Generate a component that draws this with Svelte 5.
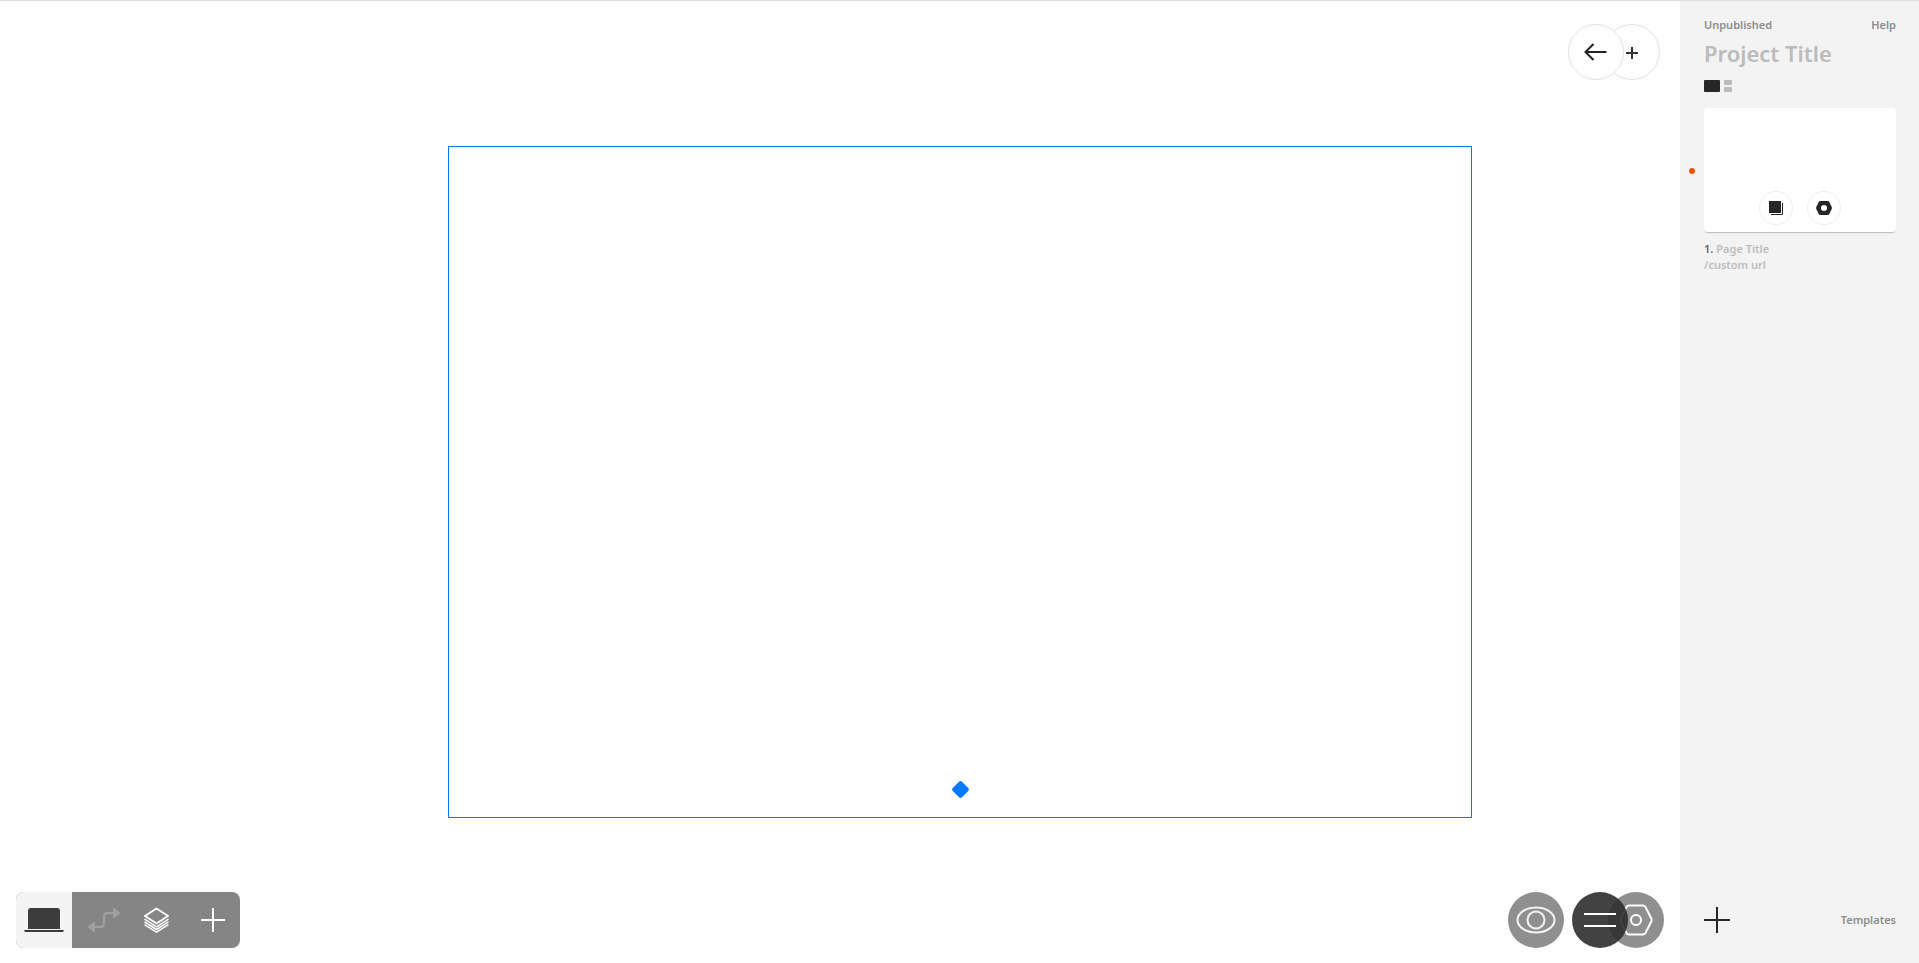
<script>
let view = $state('single');
let menuOpen = $state(true);
let title = $state('');

let pages = $state([
	{ id: 1, title: '', url: '' },
]);

function addPage() {
	pages.push({ id: pages.length + 1, title: '', url: '' });
}
</script>

<div class="editor">
	<main class="stage">
		<section class="frame" aria-label="Canvas">
			<button class="handle" aria-label="Resize page"></button>
		</section>
	</main>

	<nav class="history">
		<button class="round outline front" aria-label="Back">
			<svg width="24" height="18" viewBox="0 0 24 18">
				<path d="M22.500 9H2M9.500 1L1.500 9l8 8" fill="none" stroke="#222" stroke-width="2" />
			</svg>
		</button>
		<button class="round outline behind" aria-label="Add">
			<svg width="12" height="14" viewBox="0 -2 12 14">
				<path d="M6 0v12M0 6h12" stroke="#333" stroke-width="2" />
			</svg>
		</button>
	</nav>

	<nav class="tools">
		<button class="active" aria-label="Desktop">
			<svg width="40" height="24" viewBox="0 0 40 24">
				<path d="M4 21V3q0-3 3-3h26q3 0 3 3v18z" fill="#3c3c3c" />
				<path d="M0 22h40l-1 2H1z" fill="#3c3c3c" />
			</svg>
		</button>
		<button aria-label="Connect" disabled>
			<svg width="40" height="24" viewBox="-9 0 40 24">
				<path d="M25 5h-6q-4 0-4 4v6q0 4-4 4H5" fill="none" stroke="#a0a0a0" stroke-width="2" />
				<path d="M25 1l5 4-5 4zM5 15l-5 4 5 4z" fill="#a0a0a0" stroke="#a0a0a0" stroke-width="2" stroke-linejoin="round" />
			</svg>
		</button>
		<button aria-label="Layers">
			<svg width="26" height="26" viewBox="0 0 26 26" fill="none" stroke="#fff" stroke-width="2" stroke-linejoin="round">
				<path d="M13.500 1.500L25 9l-11.500 7.500L2 9z" />
				<path d="M1.500 12.200l12 7.600 12-7.600M1.500 14.900l12 7.600 12-7.600M1.500 17.600l12 7.600 12-7.600" stroke-width="1.500" />
			</svg>
		</button>
		<button aria-label="Add element">
			<svg width="26" height="24" viewBox="-2 0 26 24">
				<path d="M12 0v24M0 12h24" stroke="#fff" stroke-width="2" />
			</svg>
		</button>
	</nav>

	<nav class="actions">
		<button class="round solid" aria-label="Preview">
			<svg width="40" height="28" viewBox="0 0 40 28" fill="none" stroke="#f4f4f4" stroke-width="2">
				<ellipse cx="20" cy="14" rx="18.500" ry="12.500" />
				<circle cx="20" cy="14" r="8.500" />
			</svg>
		</button>
		<button class="round dark front" aria-label="Menu" aria-expanded={menuOpen} onclick={() => menuOpen = !menuOpen}>
			<svg width="32" height="14" viewBox="0 0 32 14">
				<path d="M0 1h32M0 13h32" stroke="#fff" stroke-width="2" />
			</svg>
		</button>
		<button class="round solid behind" aria-label="Settings">
			<svg width="34" height="32" viewBox="0 0 34 32" fill="none" stroke="#fff" stroke-width="2">
				<path d="M10 1.500h14q1.500 0 2.300 1.300l6 11.700q.7 1.500 0 3l-6 11.700q-.8 1.300-2.300 1.300H10q-1.500 0-2.300-1.300l-6-11.700q-.7-1.500 0-3l6-11.700Q8.500 1.500 10 1.500z" />
				<circle cx="17" cy="16" r="5" />
			</svg>
		</button>
	</nav>

	{#if menuOpen}
		<aside class="sidebar">
			<header class="row">
				<button class="link">Unpublished</button>
				<a class="link" href="#help">Help</a>
			</header>

			<input class="title" aria-label="Project title" placeholder="Project Title" bind:value={title} />

			<div class="views">
				<button class:on={view === 'single'} aria-label="Single view" onclick={() => view = 'single'}>
					<svg width="16" height="12" viewBox="0 0 16 12"><rect width="16" height="12" rx="1" /></svg>
				</button>
				<button class:on={view === 'grid'} aria-label="Grid view" onclick={() => view = 'grid'}>
					<svg width="8" height="12" viewBox="0 0 8 12"><rect width="8" height="5" rx="1" /><rect y="7" width="8" height="5" rx="1" /></svg>
				</button>
			</div>

			{#each pages as page, i (page.id)}
				<article class="page">
					<div class="thumb" class:current={i === 0}>
						<button aria-label="Duplicate page">
							<svg width="14" height="14" viewBox="0 0 14 14">
								<rect width="12" height="12" fill="#262626" />
								<path d="M13.500 2v11.500H2" fill="none" stroke="#262626" />
							</svg>
						</button>
						<button aria-label="Page settings">
							<svg width="16" height="14" viewBox="0 0 16 14">
								<path d="M4 0h8q.8 0 1.200.7l2.500 5.300q.5 1 0 2l-2.500 5.300Q12.800 14 12 14H4q-.8 0-1.200-.7L.3 8q-.5-1 0-2L2.800.7Q3.200 0 4 0z" fill="#262626" />
								<circle cx="8" cy="7" r="3" fill="#fff" />
							</svg>
						</button>
					</div>
					<div class="line">
						<label for="page-{page.id}">{i + 1}.</label>
						<input id="page-{page.id}" placeholder="Page Title" bind:value={page.title} />
					</div>
					<div class="line">
						<input aria-label="Custom url" placeholder="/custom url" bind:value={page.url} />
					</div>
				</article>
			{/each}

			<footer class="row">
				<button class="add" aria-label="Add page" onclick={addPage}>
					<svg width="26" height="26" viewBox="0 0 26 26">
						<path d="M13 0v26M0 13h26" stroke="#262626" stroke-width="2" />
					</svg>
				</button>
				<button class="link">Templates</button>
			</footer>
		</aside>
	{/if}
</div>

<style>
:global(body) {
	margin: 0;
	background: #fefefe;
}

.editor {
	--sidebar: 239px;

	position: relative;
	box-sizing: border-box;
	min-height: 100vh;
	border-top: 1px solid #ddd;

	display: grid;
	grid-template-columns: 1fr var(--sidebar);

	font: 600 11px/16px 'Noto Sans', 'Open Sans', sans-serif;
}

button {
	appearance: none;
	border: 0;
	padding: 0;
	background: none;
	font: inherit;
	color: inherit;
	cursor: pointer;
}

input {
	box-sizing: border-box;
	border: 0;
	padding: 0;
	min-width: 0;
	width: 100%;
	background: none;
	font: inherit;
	color: #262626;
	outline: none;
}

input::placeholder {
	color: #bbb;
	opacity: 1;
}

svg {
	display: block;
}

.stage {
	grid-area: 1 / 1 / 2 / 3;
	padding-left: 1px;
	display: grid;
	place-items: center;
}

.frame {
	box-sizing: border-box;
	width: 1024px;
	max-width: 100%;
	aspect-ratio: 1024 / 672;
	border: 1px solid #0079ff;
	padding-bottom: 21px;

	display: flex;
	justify-content: center;
	align-items: flex-end;
}

.handle {
	width: 13px;
	height: 13px;
	border-radius: 2px;
	background: #0079ff;
	transform: rotate(45deg);
}

.history,
.tools,
.actions {
	position: absolute;
	display: flex;
}

.history {
	top: 23px;
	right: calc(var(--sidebar) + 20px);
}

.tools {
	left: 16px;
	bottom: 15px;
	border-radius: 8px;
	overflow: hidden;
	background: #858585;

	button {
		width: 56px;
		height: 56px;
		display: grid;
		place-items: center;
	}

	.active {
		background: #f4f4f4;
	}
}

.actions {
	right: calc(var(--sidebar) + 16px);
	bottom: 15px;
	gap: 8px;
}

.round {
	box-sizing: border-box;
	width: 56px;
	height: 56px;
	border-radius: 50%;
	display: grid;
	place-items: center;

	&.outline {
		border: 1px solid #e2e2e2;
		background: #fefefe;
	}

	&.solid {
		background: #8f8f8f;
	}

	&.dark {
		background: rgba(45, 45, 45, 0.9);
	}

	&.front {
		z-index: 1;
	}
}

.history .behind {
	margin-left: -20px;
}

.actions .behind {
	margin-left: -28px;
}

.sidebar {
	grid-area: 1 / 2 / 2 / 3;
	z-index: 1;
	box-sizing: border-box;
	padding: 16px 23px 15px 24px;
	background: #f3f3f3;

	display: flex;
	flex-direction: column;
}

.row {
	display: flex;
	justify-content: space-between;
	align-items: center;
}

.link {
	color: #8c8c8c;
	text-decoration: none;
}

.title {
	height: 32px;
	margin-top: 4px;
	font-size: 22px;
	line-height: 32px;
}

.views {
	display: flex;
	gap: 4px;
	margin: 11px 0 16px;

	button {
		fill: #bbb;
	}

	.on {
		fill: #262626;
	}
}

.thumb {
	position: relative;
	box-sizing: border-box;
	height: 124px;
	padding-bottom: 7px;
	margin-bottom: 9px;
	border-radius: 4px;
	background: #fff;
	box-shadow: 0 2px 1px -1px #bbb;

	display: flex;
	justify-content: center;
	align-items: flex-end;
	gap: 14px;

	button {
		box-sizing: border-box;
		width: 34px;
		height: 34px;
		border: 1px solid #eee;
		border-radius: 50%;
		display: grid;
		place-items: center;
	}

	&.current::before {
		content: '';
		position: absolute;
		left: -15px;
		top: 60px;
		width: 6px;
		height: 6px;
		border-radius: 50%;
		background: #f4520b;
	}
}

.line {
	display: flex;
	gap: 3px;
	height: 16px;

	label {
		color: #666;
	}
}

.sidebar footer {
	height: 56px;
	margin-top: auto;
}
</style>
